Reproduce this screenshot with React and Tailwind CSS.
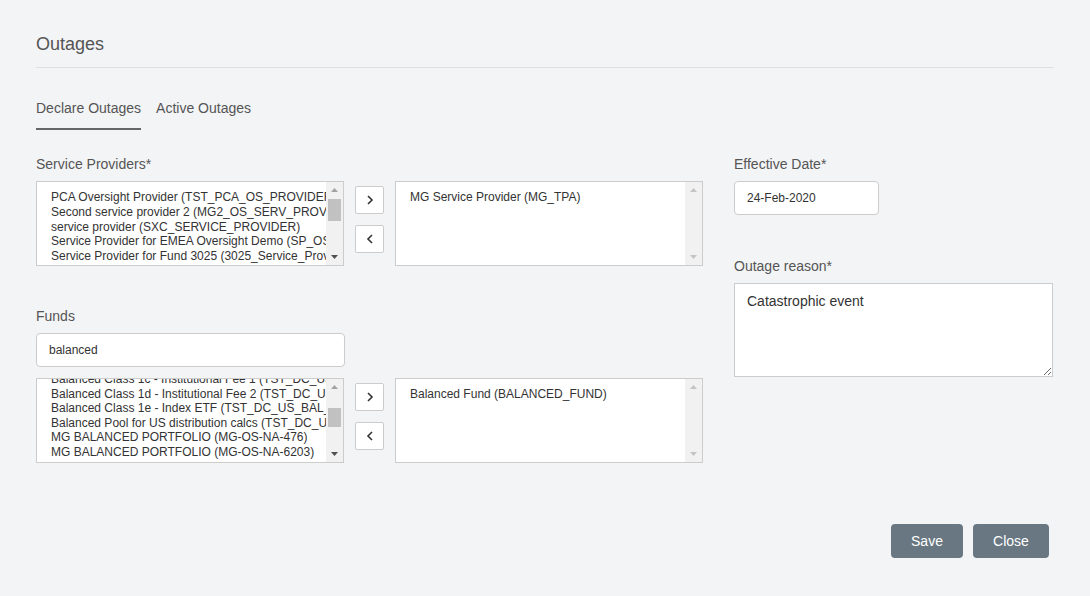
import React from 'react';

const PROVIDERS = [
  'PCA Oversight Provider (TST_PCA_OS_PROVIDER)',
  'Second service provider 2 (MG2_OS_SERV_PROVIDER)',
  'service provider (SXC_SERVICE_PROVIDER)',
  'Service Provider for EMEA Oversight Demo (SP_OSD)',
  'Service Provider for Fund 3025 (3025_Service_Provider)',
];

const FUNDS = [
  'Balanced Class 1c - Institutional Fee 1 (TST_DC_US_BAL_1C)',
  'Balanced Class 1d - Institutional Fee 2 (TST_DC_US_BAL_1D)',
  'Balanced Class 1e - Index ETF (TST_DC_US_BAL_1E)',
  'Balanced Pool for US distribution calcs (TST_DC_US_POOL)',
  'MG BALANCED PORTFOLIO (MG-OS-NA-476)',
  'MG BALANCED PORTFOLIO (MG-OS-NA-6203)',
];

const Up = ({ c }) => (
  <svg width="7" height="4" viewBox="0 0 7 4"><path d="M0 4 L3.5 0 L7 4 Z" fill={c} /></svg>
);
const Down = ({ c }) => (
  <svg width="7" height="4" viewBox="0 0 7 4"><path d="M0 0 L3.5 4 L7 0 Z" fill={c} /></svg>
);

const ScrollBar = ({ thumbTop, thumbH, disabled }) => (
  <div className="w-[17px] shrink-0 bg-[#f1f1f1] flex flex-col items-center">
    <div className="h-[16px] flex items-center justify-center">
      <Up c={disabled ? '#c4c4c4' : '#a3a3a3'} />
    </div>
    <div className="flex-1 w-full px-[2px]">
      {!disabled && (
        <div className="w-full bg-[#c1c1c1]" style={{ marginTop: thumbTop, height: thumbH }} />
      )}
    </div>
    <div className="h-[16px] flex items-center justify-center">
      <Down c={disabled ? '#c4c4c4' : '#505050'} />
    </div>
  </div>
);

const ListBox = ({ items, leading, offset, thumbTop, thumbH, disabled }) => (
  <div className="w-[308px] h-[85px] bg-white border border-[#cccccc] flex overflow-hidden">
    <div className="flex-1 overflow-hidden pl-[14px] text-[12px] text-[#333]">
      <div style={{ marginTop: offset, lineHeight: leading }}>
        {items.map((t) => (
          <div key={t} className="whitespace-nowrap">{t}</div>
        ))}
      </div>
    </div>
    <ScrollBar thumbTop={thumbTop} thumbH={thumbH} disabled={disabled} />
  </div>
);

const Chevron = ({ dir }) => (
  <svg width="8" height="10" viewBox="0 0 8 10">
    <path d={dir === 'right' ? 'M2 1 L6 5 L2 9' : 'M6 1 L2 5 L6 9'} fill="none" stroke="#333" strokeWidth="1.6" />
  </svg>
);

const MoveButtons = ({ top }) => (
  <div className="flex flex-col gap-[11px]" style={{ paddingTop: top }}>
    <button className="w-[29px] h-[28px] bg-white border border-[#cccccc] rounded-[2px] flex items-center justify-center">
      <Chevron dir="right" />
    </button>
    <button className="w-[29px] h-[28px] bg-white border border-[#cccccc] rounded-[2px] flex items-center justify-center">
      <Chevron dir="left" />
    </button>
  </div>
);

const App = () => {
  return (
    <div className="min-h-[596px] bg-[#f3f4f6] px-9 pt-8 font-['Liberation_Sans',Arial,sans-serif] text-[#555]">
      <div className="pb-[11px] border-b border-[#dedfe1] text-[18px] leading-6 text-[#555]">Outages</div>

      <div className="flex gap-[15px] mt-[30px] text-[14px] leading-5">
        <div className="pb-[10px] border-b-2 border-[#666] text-[#555]">Declare Outages</div>
        <div className="pb-[10px] text-[#555]">Active Outages</div>
      </div>

      <div className="flex mt-[24px]">
        <div className="w-[667px]">
          <div className="text-[14px] leading-5 mb-[7px]">Service Providers*</div>
          <div className="flex gap-[11px]">
            <ListBox items={PROVIDERS} leading="14.75px" offset="8px" thumbTop={1} thumbH={22} />
            <MoveButtons top={5} />
            <ListBox items={['MG Service Provider (MG_TPA)']} leading="15px" offset="8px" disabled />
          </div>

          <div className="text-[14px] leading-5 mt-[40px] mb-[7px]">Funds</div>
          <input
            readOnly
            value="balanced"
            className="w-[309px] h-[34px] bg-white border border-[#cccccc] rounded-[4px] px-3 text-[12px] text-[#333] outline-none"
          />
          <div className="flex gap-[11px] mt-[11px]">
            <ListBox items={FUNDS} leading="14.5px" offset="-7px" thumbTop={13} thumbH={19} />
            <MoveButtons top={5} />
            <ListBox items={['Balanced Fund (BALANCED_FUND)']} leading="15px" offset="8px" disabled />
          </div>
        </div>

        <div className="ml-[31px] w-[320px]">
          <div className="text-[14px] leading-5 mb-[7px]">Effective Date*</div>
          <input
            readOnly
            value="24-Feb-2020"
            className="w-[145px] h-[34px] bg-white border border-[#cccccc] rounded-[4px] px-3 text-[12px] text-[#333] outline-none"
          />
          <div className="text-[14px] leading-5 mt-[41px] mb-[7px]">Outage reason*</div>
          <textarea
            readOnly
            defaultValue="Catastrophic event"
            className="w-[319px] h-[94px] bg-white border border-[#cccccc] px-3 py-[7px] text-[14px] leading-5 text-[#333] outline-none"
          />
        </div>
      </div>

      <div className="flex justify-end gap-[10px] mt-[61px] pr-[5px]">
        <button className="w-[72px] h-[34px] rounded-[4px] bg-[#687782] text-white text-[14px]">Save</button>
        <button className="w-[76px] h-[34px] rounded-[4px] bg-[#687782] text-white text-[14px]">Close</button>
      </div>
    </div>
  );
};

export default App;
